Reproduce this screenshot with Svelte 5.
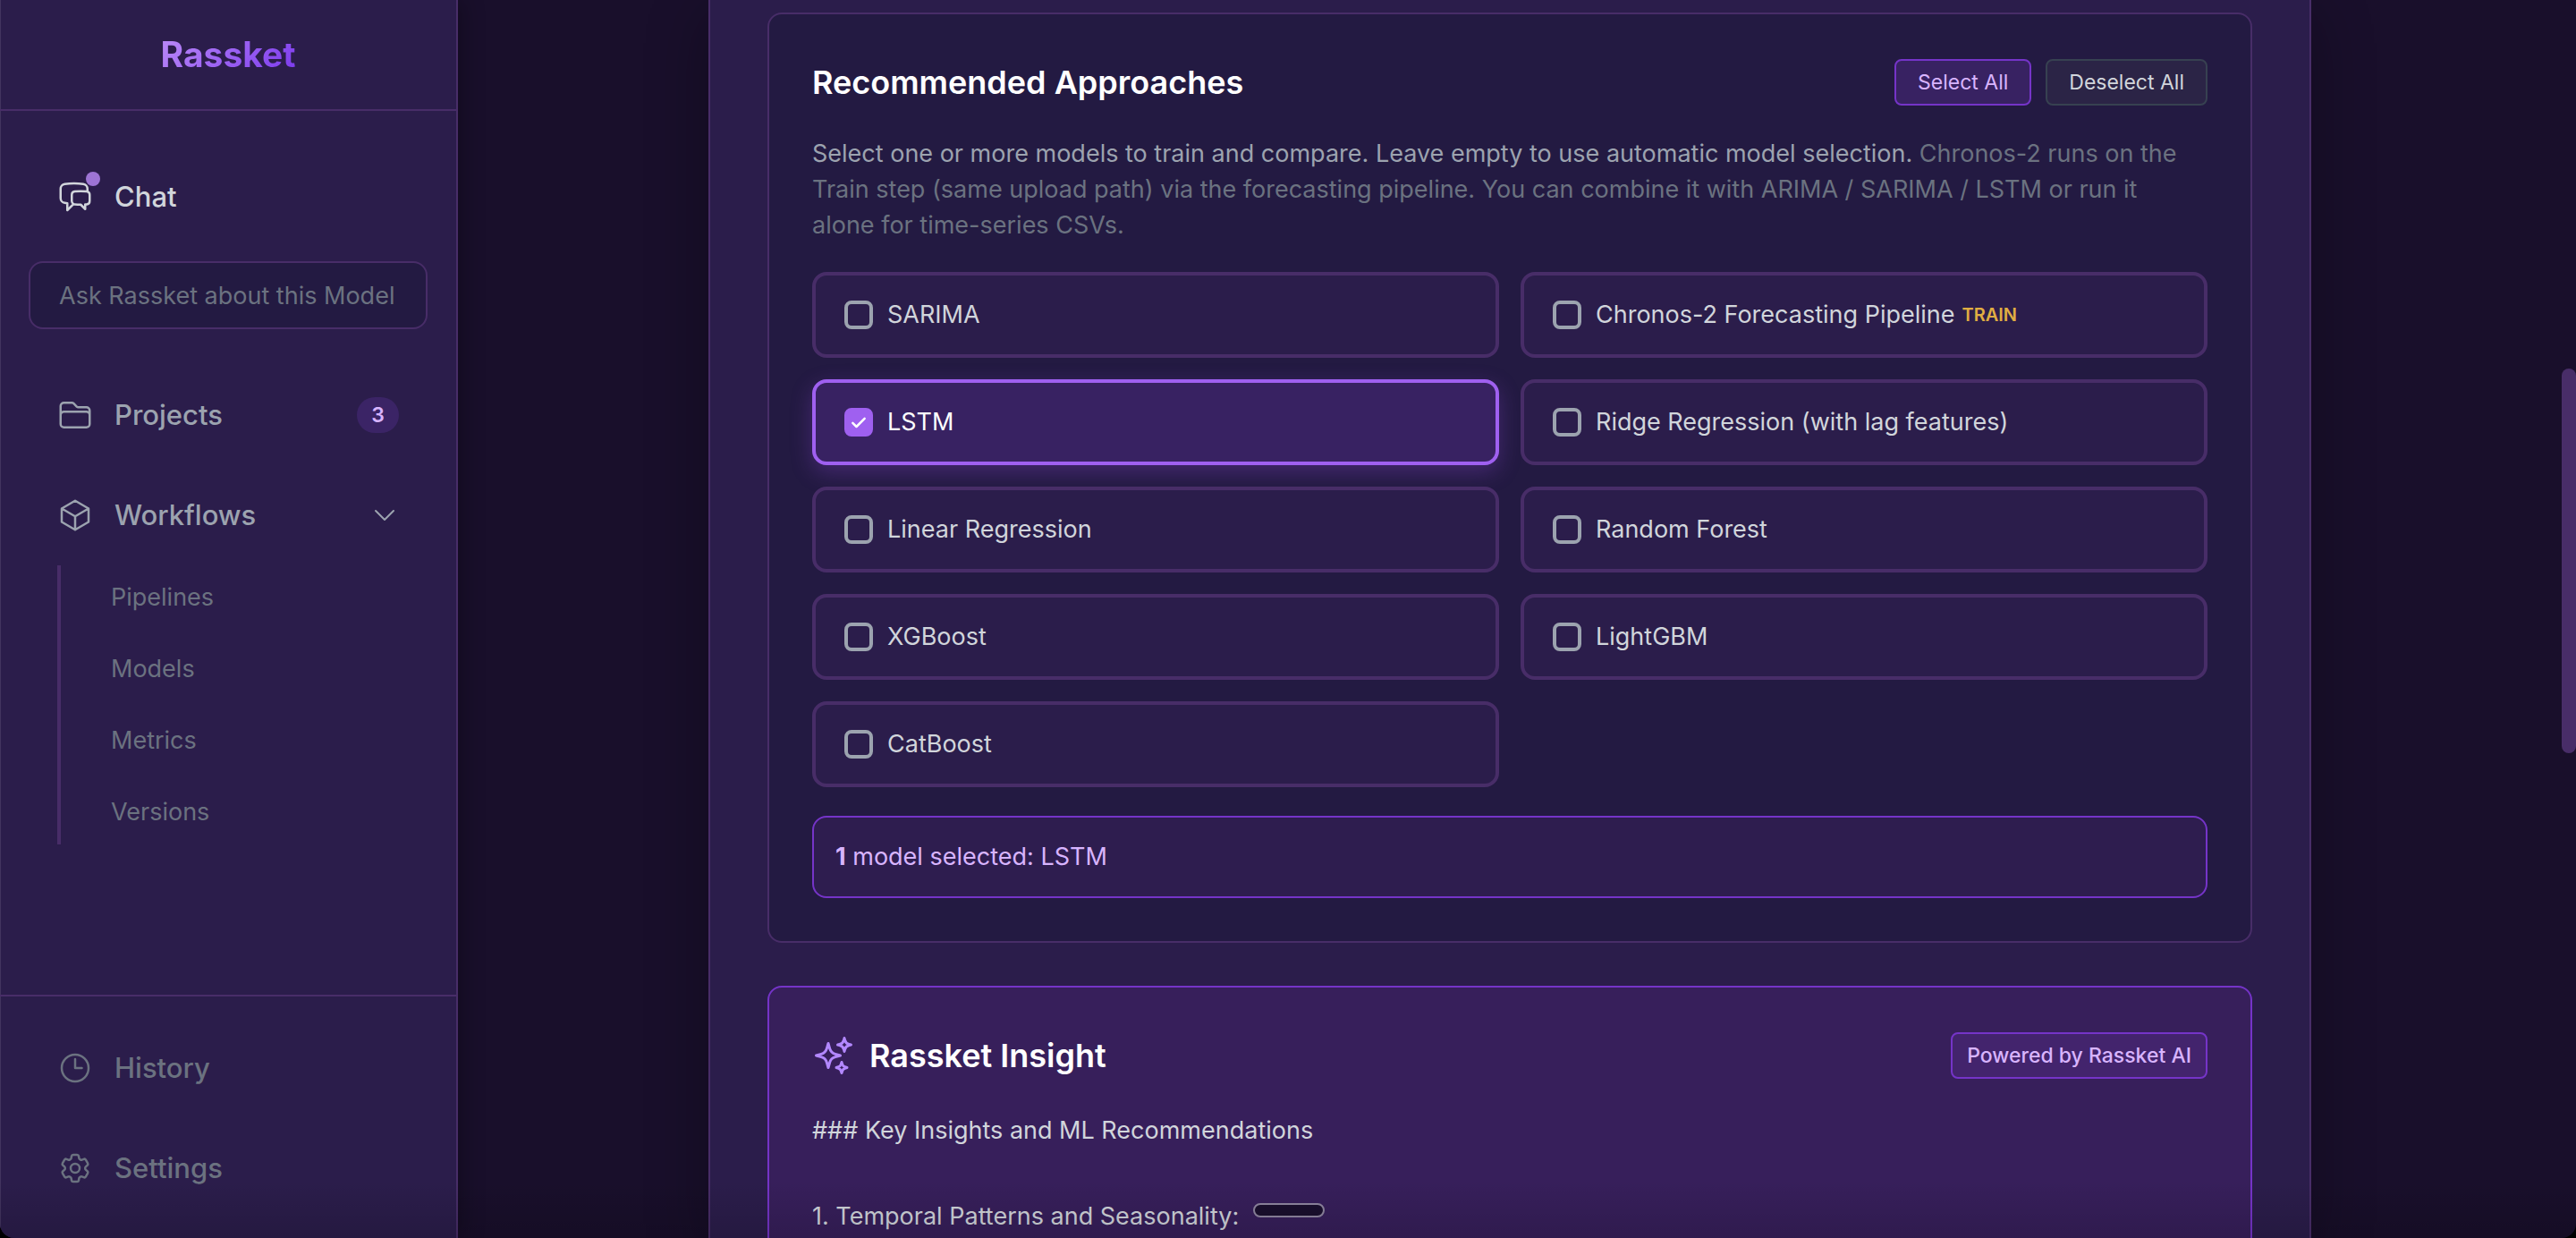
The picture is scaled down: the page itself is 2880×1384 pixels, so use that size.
<script lang="ts">
  interface Model {
    id: string;
    name: string;
    tag?: string;
  }

  const MODELS: Model[] = [
    { id: 'sarima', name: 'SARIMA' },
    { id: 'chronos', name: 'Chronos-2 Forecasting Pipeline', tag: 'TRAIN' },
    { id: 'lstm', name: 'LSTM' },
    { id: 'ridge', name: 'Ridge Regression (with lag features)' },
    { id: 'linear', name: 'Linear Regression' },
    { id: 'forest', name: 'Random Forest' },
    { id: 'xgboost', name: 'XGBoost' },
    { id: 'lightgbm', name: 'LightGBM' },
    { id: 'catboost', name: 'CatBoost' },
  ];

  const WORKFLOWS = ['Pipelines', 'Models', 'Metrics', 'Versions'];

  let selected = $state<string[]>(['lstm']);
  let question = $state('');
  let workflowsOpen = $state(true);

  let selectedNames = $derived(
    MODELS.filter(m => selected.includes(m.id)).map(m => m.name).join(', ')
  );

  function selectAll() {
    selected = MODELS.map(m => m.id);
  }

  function deselectAll() {
    selected = [];
  }
</script>

<div class="app">
  <aside class="sidebar">
    <header class="brand"><span>Rassket</span></header>

    <nav class="nav">
      <a class="row active" href="#chat">
        <span class="icon">
          <svg viewBox="0 0 24 24" aria-hidden="true">
            <path d="M20.250 8.511c.884.284 1.500 1.128 1.500 2.097v4.286c0 1.136-.847 2.100-1.980 2.193-.340.027-.680.052-1.020.072v3.091l-3-3c-1.354 0-2.694-.055-4.020-.163a2.115 2.115 0 01-.825-.242m9.345-8.334a2.126 2.126 0 00-.476-.095 48.640 48.640 0 00-8.048 0c-1.131.094-1.976 1.057-1.976 2.192v4.286c0 .837.460 1.580 1.155 1.951m9.345-8.334V6.637c0-1.621-1.152-3.026-2.760-3.235A48.455 48.455 0 0011.250 3c-2.115 0-4.198.137-6.240.402-1.608.209-2.760 1.614-2.760 3.235v6.226c0 1.621 1.152 3.026 2.760 3.235.577.075 1.157.140 1.740.194V21l4.155-4.155" />
          </svg>
          <span class="dot"></span>
        </span>
        <span class="label">Chat</span>
      </a>

      <input
        class="ask"
        type="text"
        aria-label="Ask Rassket"
        placeholder="Ask Rassket about this Model"
        bind:value={question}
      />

      <a class="row" href="#projects">
        <span class="icon">
          <svg viewBox="0 0 24 24" aria-hidden="true">
            <path d="M2.250 12.750V12A2.250 2.250 0 014.500 9.750h15A2.250 2.250 0 0121.750 12v.750m-8.690-6.440l-2.120-2.120a1.500 1.500 0 00-1.061-.44H4.500A2.250 2.250 0 002.250 6v12a2.250 2.250 0 002.250 2.250h15A2.250 2.250 0 0021.750 18V9a2.250 2.250 0 00-2.250-2.250h-5.379a1.500 1.500 0 01-1.060-.44z" />
          </svg>
        </span>
        <span class="label">Projects</span>
        <span class="count">3</span>
      </a>

      <button class="row" aria-expanded={workflowsOpen} onclick={() => (workflowsOpen = !workflowsOpen)}>
        <span class="icon">
          <svg viewBox="0 0 24 24" aria-hidden="true">
            <path d="M21 7.500l-9-5.250L3 7.500m18 0l-9 5.250m9-5.250v9l-9 5.250M3 7.500l9 5.250M3 7.500v9l9 5.250m0-9v9" />
          </svg>
        </span>
        <span class="label">Workflows</span>
        <svg class="chevron" viewBox="0 0 24 24" aria-hidden="true">
          <path d="M19.500 8.250l-7.500 7.500-7.500-7.500" />
        </svg>
      </button>

      {#if workflowsOpen}
        <div class="submenu">
          {#each WORKFLOWS as item}
            <a href="#{item.toLowerCase()}">{item}</a>
          {/each}
        </div>
      {/if}
    </nav>

    <div class="bottom">
      <a class="row muted" href="#history">
        <span class="icon">
          <svg viewBox="0 0 24 24" aria-hidden="true">
            <path d="M12 6v6h4.500m4.500 0a9 9 0 11-18 0 9 9 0 0118 0z" />
          </svg>
        </span>
        <span class="label">History</span>
      </a>
      <a class="row muted" href="#settings">
        <span class="icon">
          <svg viewBox="0 0 24 24" aria-hidden="true">
            <path d="M9.594 3.940c.09-.542.560-.940 1.110-.940h2.593c.55 0 1.020.398 1.110.940l.213 1.281c.063.374.313.686.645.870.074.040.147.083.220.127.324.196.720.257 1.075.124l1.217-.456a1.125 1.125 0 011.370.490l1.296 2.247a1.125 1.125 0 01-.260 1.431l-1.003.827c-.293.240-.438.613-.431.992a6.759 6.759 0 010 .255c-.007.378.138.750.430.990l1.005.828c.424.350.534.954.260 1.430l-1.298 2.247a1.125 1.125 0 01-1.369.491l-1.217-.456c-.355-.133-.750-.072-1.076.124a6.570 6.570 0 01-.220.128c-.331.183-.581.495-.644.869l-.213 1.280c-.09.543-.560.941-1.110.941h-2.594c-.550 0-1.020-.398-1.110-.940l-.213-1.281c-.062-.374-.312-.686-.644-.870a6.520 6.520 0 01-.220-.127c-.325-.196-.720-.257-1.076-.124l-1.217.456a1.125 1.125 0 01-1.369-.490l-1.297-2.247a1.125 1.125 0 01.260-1.431l1.004-.827c.292-.240.437-.613.430-.992a6.932 6.932 0 010-.255c.007-.378-.138-.750-.430-.990l-1.004-.828a1.125 1.125 0 01-.260-1.430l1.297-2.247a1.125 1.125 0 011.370-.491l1.216.456c.356.133.751.072 1.076-.124.072-.044.146-.087.220-.128.332-.183.582-.495.644-.869l.214-1.281z" />
            <path d="M15 12a3 3 0 11-6 0 3 3 0 016 0z" />
          </svg>
        </span>
        <span class="label">Settings</span>
      </a>
    </div>
  </aside>

  <main class="main">
    <div class="panel">
      <section class="card">
        <div class="card-head">
          <h2>Recommended Approaches</h2>
          <div class="actions">
            <button class="btn primary" onclick={selectAll}>Select All</button>
            <button class="btn" onclick={deselectAll}>Deselect All</button>
          </div>
        </div>

        <p class="hint">
          Select one or more models to train and compare. Leave empty to use automatic model selection.
          <span>Chronos-2 runs on the Train step (same upload path) via the forecasting pipeline. You can combine it with ARIMA / SARIMA / LSTM or run it alone for time-series CSVs.</span>
        </p>

        <div class="models">
          {#each MODELS as model}
            <label class="model" class:checked={selected.includes(model.id)}>
              <input type="checkbox" value={model.id} bind:group={selected} />
              <span class="box">
                <svg viewBox="0 0 24 24" aria-hidden="true"><path d="M4 13l5 5L20 7" /></svg>
              </span>
              <span>{model.name}</span>
              {#if model.tag}<span class="tag">{model.tag}</span>{/if}
            </label>
          {/each}
        </div>

        {#if selected.length > 0}
          <p class="summary">
            <strong>{selected.length}</strong> model{selected.length === 1 ? '' : 's'} selected: {selectedNames}
          </p>
        {/if}
      </section>

      <section class="card insight">
        <div class="card-head">
          <div class="title">
            <svg viewBox="0 0 24 24" aria-hidden="true">
              <path d="M9.813 15.904L9 18.750l-.813-2.846a4.500 4.500 0 00-3.090-3.090L2.250 12l2.846-.813a4.500 4.500 0 003.090-3.090L9 5.250l.813 2.846a4.500 4.500 0 003.090 3.090L15.750 12l-2.846.813a4.500 4.500 0 00-3.090 3.090zM18.259 8.715L18 9.750l-.259-1.035a3.375 3.375 0 00-2.455-2.456L14.250 6l1.036-.259a3.375 3.375 0 002.455-2.456L18 2.250l.259 1.035a3.375 3.375 0 002.456 2.456L21.750 6l-1.035.259a3.375 3.375 0 00-2.456 2.456zM16.894 20.567L16.500 21.750l-.394-1.183a2.250 2.250 0 00-1.423-1.423L13.500 18.750l1.183-.394a2.250 2.250 0 001.423-1.423l.394-1.183.394 1.183a2.250 2.250 0 001.423 1.423l1.183.394-1.183.394a2.250 2.250 0 00-1.423 1.423z" />
            </svg>
            <h2>Rassket Insight</h2>
          </div>
          <span class="powered">Powered by Rassket AI</span>
        </div>

        <div class="insight-body">
          <p>### Key Insights and ML Recommendations</p>
          <p class="point">1. Temporal Patterns and Seasonality: <span class="pill"></span></p>
        </div>
      </section>
    </div>
  </main>

  <div class="scrollbar"><div class="thumb"></div></div>
  <div class="fade"></div>
</div>

<style>
  :global(body) {
    background: #000;
  }

  .app {
    position: relative;
    display: flex;
    box-sizing: border-box;
    height: 100vh;
    overflow: hidden;
    border-radius: 0 0 16px 16px;
    background: #190f2b;
    color: #d1d5db;
    font-family: Inter, 'Open Sans', sans-serif;
    font-size: 27px;
    line-height: 40px;
  }

  h2,
  p {
    margin: 0;
  }

  svg {
    display: block;
    fill: none;
    stroke: currentColor;
    stroke-width: 1.5;
    stroke-linecap: round;
    stroke-linejoin: round;
  }

  button,
  input {
    font: inherit;
    color: inherit;
  }

  /* ── sidebar ── */
  .sidebar {
    display: flex;
    flex-direction: column;
    flex: 0 0 512px;
    box-sizing: border-box;
    border-right: 2px solid #482d68;
    background: #2b1d4b;
    box-shadow: inset 1px 0 #42345f, 4px 0 24px rgba(0, 0, 0, 0.3);
  }

  .brand {
    display: flex;
    align-items: center;
    justify-content: center;
    height: 122px;
    border-bottom: 2px solid #482d68;
    font-size: 39px;
    font-weight: 700;
  }

  .brand span {
    background: linear-gradient(135deg, #bb8af8, #7c3aed);
    background-clip: text;
    color: transparent;
  }

  .nav {
    display: flex;
    flex: 1;
    flex-direction: column;
    gap: 16px;
    padding: 48px 32px 0;
  }

  .row {
    display: flex;
    align-items: center;
    gap: 24px;
    flex-shrink: 0;
    box-sizing: border-box;
    height: 96px;
    padding: 0 32px;
    border: 0;
    background: none;
    color: #9ca3af;
    font-size: 31px;
    font-weight: 500;
    text-align: left;
    text-decoration: none;
    cursor: pointer;
  }

  .row.active { color: #d1d5db; }
  .row.muted { color: #6b7280; }

  .icon {
    position: relative;
    width: 40px;
    height: 40px;
  }

  .dot {
    position: absolute;
    top: -8px;
    right: -8px;
    width: 16px;
    height: 16px;
    border-radius: 50%;
    background: #9d74d4;
  }

  .label { flex: 1; }

  .count {
    box-sizing: border-box;
    min-width: 47px;
    border-radius: 20px;
    background: #3b2466;
    color: #d8b4fe;
    font-size: 23px;
    font-weight: 600;
    text-align: center;
  }

  .chevron {
    width: 32px;
    height: 32px;
  }

  .ask {
    box-sizing: border-box;
    width: 100%;
    height: 76px;
    margin: 8px 0 32px;
    padding: 0 32px;
    border: 2px solid #482d68;
    border-radius: 16px;
    background: #231a42;
  }

  .ask::placeholder {
    color: #6b7280;
    opacity: 1;
  }

  .submenu {
    display: flex;
    flex-direction: column;
    gap: 8px;
    margin: -8px 0 0 32px;
    padding-left: 24px;
    border-left: 4px solid #482d68;
  }

  .submenu a {
    padding: 16px 32px;
    color: #6b7280;
    text-decoration: none;
  }

  .bottom {
    display: flex;
    flex-direction: column;
    gap: 16px;
    padding: 32px 32px 30px;
    border-top: 2px solid #482d68;
  }

  /* ── main column ── */
  .main {
    display: flex;
    flex: 1;
    justify-content: center;
    overflow: hidden;
  }

  .panel {
    display: flex;
    flex-direction: column;
    gap: 48px;
    box-sizing: border-box;
    width: 1792px;
    max-width: 100%;
    min-height: 100vh;
    padding: 14px 64px 0;
    border: solid #482d68;
    border-width: 0 2px;
    background: #2b1d4b;
    box-shadow: 0 16px 64px rgba(0, 0, 0, 0.3);
  }

  .card {
    flex-shrink: 0;
    padding: 48px;
    border: 2px solid #482d68;
    border-radius: 16px;
    background: #231a42;
  }

  .card-head {
    display: flex;
    align-items: center;
    justify-content: space-between;
    height: 56px;
    margin-bottom: 32px;
  }

  .card-head h2 {
    color: #fff;
    font-size: 36px;
    font-weight: 600;
  }

  .actions {
    display: flex;
    gap: 16px;
  }

  .btn,
  .powered {
    box-sizing: border-box;
    height: 52px;
    padding: 0 24px;
    border: 2px solid #374151;
    border-radius: 8px;
    background: #2b2446;
    color: #d1d5db;
    font-size: 23px;
    line-height: 48px;
    cursor: pointer;
  }

  .btn.primary {
    border-color: #7534c8;
    background: #382262;
    color: #d8b4fe;
  }

  .hint {
    margin-bottom: 32px;
    padding-right: 16px;
    color: #9ca3af;
  }

  .hint span { color: #6b7280; }

  /* ── model grid ── */
  .models {
    display: grid;
    grid-template-columns: 1fr 1fr;
    gap: 24px;
  }

  .model {
    display: flex;
    align-items: center;
    box-sizing: border-box;
    height: 96px;
    padding: 0 32px;
    border: 4px solid #482d68;
    border-radius: 16px;
    background: #2b1d4b;
    cursor: pointer;
  }

  .model.checked {
    border-color: #9f60f0;
    background: #382262;
    box-shadow: 0 8px 24px rgba(168, 85, 247, 0.25);
    color: #fff;
  }

  .model input {
    position: absolute;
    opacity: 0;
  }

  .box {
    box-sizing: border-box;
    width: 32px;
    height: 32px;
    margin-right: 16px;
    border: 4px solid #9ca3af;
    border-radius: 8px;
  }

  .box svg {
    display: none;
    stroke-width: 3;
  }

  .checked .box {
    padding: 2px;
    border-color: #9f60f0;
    background: #9f60f0;
  }

  .checked .box svg { display: block; }

  .tag {
    margin-left: 8px;
    color: #e0ae42;
    font-size: 20px;
    font-weight: 600;
  }

  .summary {
    margin-top: 32px;
    padding: 24px;
    border: 2px solid #7534c8;
    border-radius: 16px;
    background: #2e1d4f;
    color: #d8b4fe;
  }

  /* ── insight ── */
  .insight {
    border-color: #7534c8;
    background: #371f5b;
  }

  .title {
    display: flex;
    align-items: center;
    gap: 16px;
  }

  .title svg {
    width: 48px;
    height: 48px;
    color: #b388ff;
  }

  .powered {
    padding: 0 16px;
    border-color: #7534c8;
    background: #43246d;
    color: #d8b4fe;
    font-weight: 500;
    cursor: default;
  }

  .insight-body { line-height: 48px; }
  .point { margin-top: 48px; }

  .pill {
    display: inline-block;
    box-sizing: border-box;
    width: 80px;
    height: 16px;
    margin-left: 8px;
    border: 2px solid #8f86a0;
    border-radius: 8px;
    background: #1a0f2e;
    vertical-align: 8px;
  }

  /* ── window edges ── */
  .scrollbar {
    flex: 0 0 16px;
    padding-top: 412px;
    box-sizing: border-box;
  }

  .thumb {
    height: 430px;
    border-radius: 8px;
    background: #482d68;
  }

  .fade {
    position: absolute;
    inset: auto 0 0;
    height: 64px;
    background: linear-gradient(transparent, rgba(0, 0, 0, 0.14));
    pointer-events: none;
  }
</style>
